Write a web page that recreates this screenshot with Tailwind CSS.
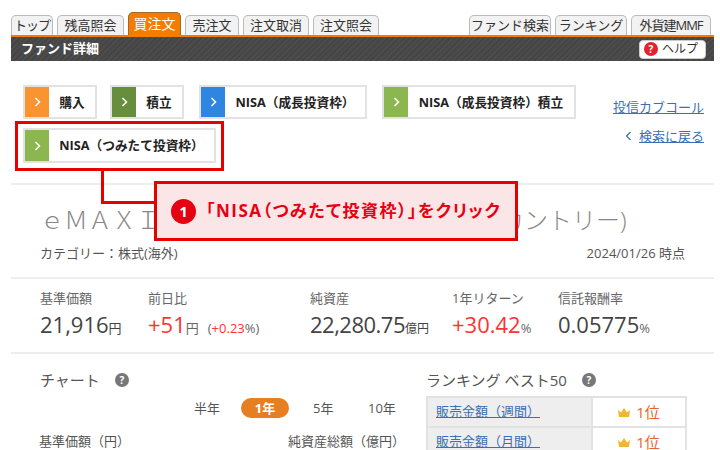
<!DOCTYPE html>
<html lang="ja">
<head>
<meta charset="UTF-8">
<script src="https://cdn.jsdelivr.net/npm/@tailwindcss/browser@4"></script>
<title>ファンド詳細</title>
</head>
<body class="bg-white">
<div class="relative w-[720px] h-[450px] overflow-hidden bg-white text-[#444] font-['Open_Sans','Noto_Sans_CJK_JP',sans-serif]">

  <!-- tabs -->
  <div class="flex items-end justify-between h-[35px] pl-[11px] pr-[9px] text-[13px] leading-none text-[#333]">
    <div class="flex items-end gap-1">
      <a class="flex items-center justify-center w-[42px] h-5 bg-[#f2f2f2] border border-b-0 border-[#bbb] rounded-t-[5px] tracking-[-1px]">トップ</a>
      <a class="flex items-center justify-center w-[67px] h-5 bg-[#f2f2f2] border border-b-0 border-[#bbb] rounded-t-[5px]">残高照会</a>
      <a class="flex items-center justify-center w-[53px] h-[23px] bg-[#f57c00] border border-b-0 border-[#9a6a30] rounded-t-[5px] text-white text-[14px]">買注文</a>
      <a class="flex items-center justify-center w-[54px] h-5 bg-[#f2f2f2] border border-b-0 border-[#bbb] rounded-t-[5px]">売注文</a>
      <a class="flex items-center justify-center w-[66px] h-5 bg-[#f2f2f2] border border-b-0 border-[#bbb] rounded-t-[5px]">注文取消</a>
      <a class="flex items-center justify-center w-[66px] h-5 bg-[#f2f2f2] border border-b-0 border-[#bbb] rounded-t-[5px]">注文照会</a>
    </div>
    <div class="flex items-end gap-1">
      <a class="flex items-center justify-center w-[82px] h-5 bg-[#f2f2f2] border border-b-0 border-[#bbb] rounded-t-[5px]">ファンド検索</a>
      <a class="flex items-center justify-center w-[72px] h-5 bg-[#f2f2f2] border border-b-0 border-[#bbb] rounded-t-[5px]">ランキング</a>
      <a class="flex items-center justify-center w-[80px] h-5 bg-[#f2f2f2] border border-b-0 border-[#bbb] rounded-t-[5px] tracking-[-1px]">外貨建MMF</a>
    </div>
  </div>

  <!-- title bar -->
  <div class="flex items-center justify-between ml-[11px] mr-[6px] h-[26px] pl-[10px] pr-2 border-t-2 border-[#f57c00] bg-[repeating-linear-gradient(135deg,#4c4c4c_0,#4c4c4c_2px,#454545_2px,#454545_4px)]">
    <span class="text-[13px] font-bold text-white">ファンド詳細</span>
    <span class="flex items-center gap-1 w-[67px] h-[19px] pl-1 bg-white border border-[#ccc] rounded-sm text-[12px] text-[#333]">
      <span class="flex items-center justify-center w-[14px] h-[14px] rounded-full bg-[#e0232c] text-white text-[10px] font-bold leading-none">?</span>ヘルプ
    </span>
  </div>

  <!-- order buttons -->
  <div class="flex justify-between h-[124px] ml-[11px] mr-[6px] pl-3 pr-[10px] pt-6 border-b-2 border-[#eee]">
    <div class="flex flex-col gap-[9px] text-[12.7px] font-bold text-[#222]">
      <div class="flex gap-[13px]">
        <a class="flex w-[74px] h-[34px] border-2 border-[#e2e2e2] bg-white"><span class="flex items-center justify-center w-6 bg-[#f99431]"><svg width="7" height="10" viewBox="0 0 7 10"><path d="M1.500 1 5.500 5 1.500 9" fill="none" stroke="#fff" stroke-width="1.500"/></svg></span><span class="flex-1 text-center leading-[30px]">購入</span></a>
        <a class="flex w-[74px] h-[34px] border-2 border-[#e2e2e2] bg-white"><span class="flex items-center justify-center w-6 bg-[#668e3c]"><svg width="7" height="10" viewBox="0 0 7 10"><path d="M1.500 1 5.500 5 1.500 9" fill="none" stroke="#fff" stroke-width="1.500"/></svg></span><span class="flex-1 text-center leading-[30px]">積立</span></a>
        <a class="flex w-[168px] h-[34px] border-2 border-[#e2e2e2] bg-white ml-[2px]"><span class="flex items-center justify-center w-6 bg-[#2f86e0]"><svg width="7" height="10" viewBox="0 0 7 10"><path d="M1.500 1 5.500 5 1.500 9" fill="none" stroke="#fff" stroke-width="1.500"/></svg></span><span class="flex-1 text-center leading-[30px]">NISA（成長投資枠）</span></a>
        <a class="flex w-[194px] h-[34px] border-2 border-[#e2e2e2] bg-white ml-[2px]"><span class="flex items-center justify-center w-6 bg-[#8cb650]"><svg width="7" height="10" viewBox="0 0 7 10"><path d="M1.500 1 5.500 5 1.500 9" fill="none" stroke="#fff" stroke-width="1.500"/></svg></span><span class="flex-1 text-center leading-[30px]">NISA（成長投資枠）積立</span></a>
      </div>
      <a class="flex w-[193px] h-[35px] border-2 border-[#e2e2e2] bg-white"><span class="flex items-center justify-center w-6 bg-[#8cb650]"><svg width="7" height="10" viewBox="0 0 7 10"><path d="M1.500 1 5.500 5 1.500 9" fill="none" stroke="#fff" stroke-width="1.500"/></svg></span><span class="flex-1 text-center leading-[31px]">NISA（つみたて投資枠）</span></a>
    </div>
    <div class="flex flex-col items-end gap-[13px] pt-[14px] text-[13px] leading-[16px] text-[#3a6fb5]">
      <a class="underline">投信カブコール</a>
      <span class="flex items-center"><svg class="mr-[7px]" width="7" height="10" viewBox="0 0 7 10"><path d="M5.500 1 1.500 5 5.500 9" fill="none" stroke="#3a6fb5" stroke-width="1.200"/></svg><a class="underline">検索に戻る</a></span>
    </div>
  </div>

  <!-- fund name -->
  <div class="h-[94px] ml-[11px] mr-[6px] px-[29px] pt-[19px] border-b-2 border-[#eee]">
    <h1 class="text-[24px] leading-[32px] font-light text-[#888] whitespace-nowrap">ｅＭＡＸＩＳ Ｓｌｉｍ <span class="tracking-[-1.500px]">全世界株式(オール・</span>カントリー)</h1>
    <div class="flex justify-between mt-2 text-[13px] leading-[18px] text-[#555]">
      <span>カテゴリー：株式(海外)</span>
      <span>2024/01/26 時点</span>
    </div>
  </div>

  <!-- stats -->
  <div class="flex h-[75px] ml-[11px] mr-[6px] pl-[29px] pt-[10px] border-b-2 border-[#eee] text-[13px] leading-[18px] text-[#666]">
    <div class="w-[108px]">
      <p>基準価額</p>
      <p class="mt-1 text-[#444]"><span class="text-[22px] leading-[26px]">21,916</span>円</p>
    </div>
    <div class="w-[162px]">
      <p>前日比</p>
      <p class="mt-1"><span class="text-[22px] leading-[26px] text-[#f33]">+51</span>円<span class="ml-[9px] text-[13px]">(<span class="text-[#f33]">+0.23</span>%)</span></p>
    </div>
    <div class="w-[142px]">
      <p>純資産</p>
      <p class="mt-1 text-[#444]"><span class="text-[22px] leading-[26px] tracking-[-0.5px]">22,280.75</span><span class="text-[12px]">億円</span></p>
    </div>
    <div class="w-[106px]">
      <p>1年リターン</p>
      <p class="mt-1"><span class="text-[22px] leading-[26px] text-[#f33]">+30.42</span>%</p>
    </div>
    <div>
      <p>信託報酬率</p>
      <p class="mt-1 text-[#444]"><span class="text-[22px] leading-[26px]">0.05775</span><span class="text-[#666]">%</span></p>
    </div>
  </div>

  <!-- chart and ranking -->
  <div class="flex pt-4 pl-[39px] text-[13px] text-[#555]">
    <div class="w-[387px]">
      <div class="flex items-center gap-[15px] h-5 ml-[1px] text-[15px] leading-5">チャート
        <span class="flex items-center justify-center w-[14px] h-[14px] rounded-full bg-[#777] text-white text-[10px] font-bold leading-none">?</span>
      </div>
      <div class="flex items-center mt-2 ml-[155px] h-5 leading-5">
        <span class="w-[47px]">半年</span>
        <span class="w-[48px] h-5 rounded-full bg-[#e67e22] text-center font-bold text-white">1年</span>
        <span class="ml-6 w-[55px]">5年</span>
        <span>10年</span>
      </div>
      <div class="flex justify-between w-[366px] mt-[14px] leading-[18px]">
        <span>基準価額（円）</span>
        <span>純資産総額（億円）</span>
      </div>
    </div>
    <div class="w-[261px]">
      <div class="flex items-center gap-[15px] h-5 text-[15px] leading-5">ランキング ベスト50
        <span class="flex items-center justify-center w-[14px] h-[14px] rounded-full bg-[#777] text-white text-[10px] font-bold leading-none">?</span>
      </div>
      <table class="w-[261px] mt-[6px] border-2 border-[#e2e2e2] border-collapse">
        <tbody>
          <tr class="h-[30px]">
            <td class="w-[165px] pl-2 bg-[#eee] border-2 border-[#e2e2e2] text-[#3a6fb5]"><a class="underline">販売金額（週間）</a></td>
            <td class="border-2 border-[#e2e2e2] text-center text-[#e8652c] text-[15px]"><svg class="inline mr-[6px] mb-[2px]" width="12" height="10" viewBox="0 0 12 10"><path d="M1 9 0 2l3 2.500L6 0l3 4.500L12 2l-1 7z" fill="#f2b632"/></svg>1位</td>
          </tr>
          <tr class="h-[30px]">
            <td class="pl-2 bg-[#eee] border-2 border-[#e2e2e2] text-[#3a6fb5]"><a class="underline">販売金額（月間）</a></td>
            <td class="border-2 border-[#e2e2e2] text-center text-[#e8652c] text-[15px]"><svg class="inline mr-[6px] mb-[2px]" width="12" height="10" viewBox="0 0 12 10"><path d="M1 9 0 2l3 2.500L6 0l3 4.500L12 2l-1 7z" fill="#f2b632"/></svg>1位</td>
          </tr>
        </tbody>
      </table>
    </div>
  </div>

  <!-- annotation over the page -->
  <div class="absolute left-[15px] top-[121px] w-[209px] h-[50px] border-[3px] border-[#e60000]"></div>
  <div class="absolute left-[101px] top-[171px] w-[53px] h-[33px] border-l-[3px] border-b-[3px] border-[#e60000]"></div>
  <div class="absolute left-[154px] top-[181px] flex items-center w-[364px] h-[60px] pl-[14px] border-[3px] border-[#e60000] bg-[#fae6e6] text-[17px] font-bold text-[#e60012]">
    <span class="flex items-center justify-center w-[25px] h-[25px] mr-[10px] rounded-full bg-[#e60012] text-white text-[15px] leading-none">1</span>
    <span class="[font-feature-settings:'palt'] tracking-[1.500px] whitespace-nowrap">「NISA（つみたて投資枠）」をクリック</span>
  </div>
</div>
</body>
</html>
